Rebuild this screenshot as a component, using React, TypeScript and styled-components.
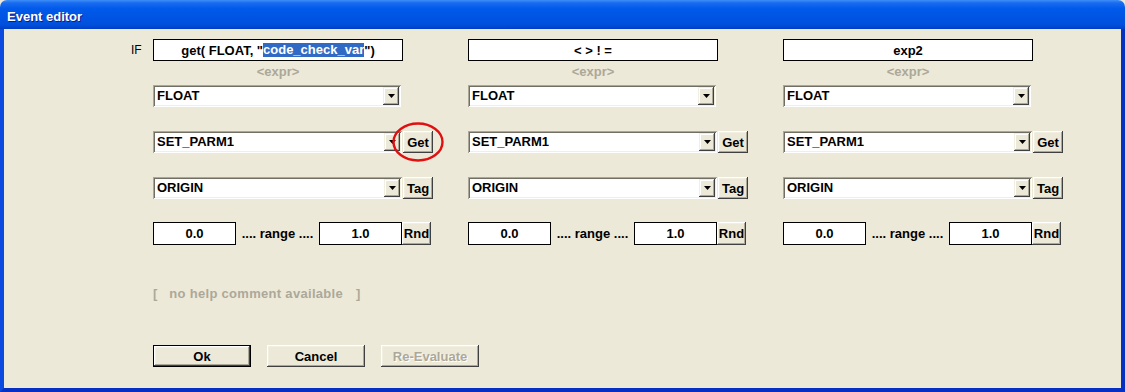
import styled, { createGlobalStyle } from "styled-components";

const GlobalStyle = createGlobalStyle`
  html, body {
    margin: 0;
    padding: 0;
    background: #ece9d8;
  }
  #root {
    width: 1125px;
    height: 392px;
  }
`;

interface ColumnData {
  expr: string;
  selected?: string;
  after?: string;
  type: string;
  parm: string;
  origin: string;
  min: string;
  max: string;
  circled?: boolean;
}

const columns: ColumnData[] = [
  {
    expr: 'get( FLOAT, "',
    selected: "code_check_var",
    after: '")',
    type: "FLOAT",
    parm: "SET_PARM1",
    origin: "ORIGIN",
    min: "0.0",
    max: "1.0",
    circled: true,
  },
  { expr: "< > ! =", type: "FLOAT", parm: "SET_PARM1", origin: "ORIGIN", min: "0.0", max: "1.0" },
  { expr: "exp2", type: "FLOAT", parm: "SET_PARM1", origin: "ORIGIN", min: "0.0", max: "1.0" },
];

function Combo({ value, width }: { value: string; width: number }) {
  return (
    <Select $width={width}>
      <SelectValue>{value}</SelectValue>
      <ArrowButton>
        <svg width="7" height="4" viewBox="0 0 7 4">
          <path d="M0 0h7L3.5 4z" fill="#000" />
        </svg>
      </ArrowButton>
    </Select>
  );
}

export default function App() {
  return (
    <>
      <GlobalStyle />
      <Window>
        <TitleBar>
          <TitleText>Event editor</TitleText>
        </TitleBar>

        <Frame>
          <Editor>
            <IfLabel>IF</IfLabel>
            {columns.map((c, i) => (
              <Column key={i}>
                <ExprBox>
                  {c.expr}
                  {c.selected && <Selected>{c.selected}</Selected>}
                  {c.after}
                </ExprBox>
                <Hint>&lt;expr&gt;</Hint>

                <Combo value={c.type} width={248} />

                <ChoiceRow $gap={24}>
                  <Combo value={c.parm} width={249} />
                  <SideButtonWrap>
                    <SideButton $width={30}>Get</SideButton>
                    {c.circled && (
                      <CircleMark width="54" height="42" viewBox="0 0 54 42">
                        <ellipse cx="27" cy="21" rx="24.5" ry="18.5" fill="none" stroke="#e01010" strokeWidth="2.4" />
                      </CircleMark>
                    )}
                  </SideButtonWrap>
                </ChoiceRow>

                <ChoiceRow $gap={24}>
                  <Combo value={c.origin} width={249} />
                  <SideButton $width={30}>Tag</SideButton>
                </ChoiceRow>

                <RangeRow>
                  <NumBox>{c.min}</NumBox>
                  <RangeLabel>.... range ....</RangeLabel>
                  <NumBox>{c.max}</NumBox>
                  <SideButton $width={29} $tall>
                    Rnd
                  </SideButton>
                </RangeRow>
              </Column>
            ))}
          </Editor>

          <HelpText>
            <span>[</span>
            <HelpMessage>no help comment available</HelpMessage>
            <span>]</span>
          </HelpText>

          <ButtonBar>
            <DialogButton $default>Ok</DialogButton>
            <DialogButton>Cancel</DialogButton>
            <DialogButton disabled>Re-Evaluate</DialogButton>
          </ButtonBar>
        </Frame>
      </Window>
    </>
  );
}

// ---------- styled components ----------
const Window = styled.div`
  width: 1125px;
  height: 392px;
  display: flex;
  flex-direction: column;
  font-family: "Liberation Sans", Arial, sans-serif;
  font-size: 13px;
  font-weight: 700;
  color: #000;
  overflow: hidden;
`;

const TitleBar = styled.div`
  height: 29px;
  flex: 0 0 29px;
  display: flex;
  align-items: center;
  padding: 0 7px;
  border-radius: 7px 7px 0 0;
  background: linear-gradient(
    to bottom,
    #3d8ff8 0%,
    #1a6cf0 10%,
    #005aea 30%,
    #0054e3 60%,
    #0050dc 85%,
    #003fc4 100%
  );
`;

const TitleText = styled.span`
  color: #fff;
  font-size: 13px;
  font-weight: 700;
  text-shadow: 1px 1px 0 #0a1e8c;
  margin-top: 3px;
`;

const Frame = styled.div`
  flex: 1 1 auto;
  display: flex;
  flex-direction: column;
  background: #ece9d8;
  border: 4px solid #0838d0;
  border-top: none;
  border-left-color: #0a4ae0;
  border-right-color: #0630c0;
  border-bottom-color: #0630c4;
  padding-top: 10px;
`;

const Editor = styled.div`
  display: grid;
  grid-template-columns: 149px repeat(3, 315px);
`;

const IfLabel = styled.div`
  height: 22px;
  line-height: 22px;
  padding-left: 127px;
  font-weight: 400;
  font-size: 12px;
`;

const Column = styled.div`
  display: flex;
  flex-direction: column;
  align-items: flex-start;
`;

const ExprBox = styled.div`
  box-sizing: border-box;
  width: 250px;
  height: 22px;
  border: 1px solid #000;
  background: #fff;
  display: flex;
  align-items: center;
  justify-content: center;
  white-space: pre;
`;

const Selected = styled.span`
  background: #316ac5;
  color: #fff;
  line-height: 14px;
`;

const Hint = styled.div`
  width: 250px;
  height: 24px;
  line-height: 22px;
  text-align: center;
  color: #aca899;
`;

const Select = styled.div<{ $width: number }>`
  box-sizing: border-box;
  width: ${({ $width }) => $width}px;
  height: 22px;
  display: flex;
  align-items: stretch;
  padding: 2px;
  background: #fff;
  box-shadow:
    inset 1px 1px #aca899,
    inset -1px -1px #fff,
    inset 2px 2px #716f64,
    inset -2px -2px #f1efe2;
`;

const SelectValue = styled.span`
  flex: 1 1 auto;
  line-height: 18px;
  padding-left: 2px;
  white-space: nowrap;
`;

const ArrowButton = styled.span`
  flex: 0 0 16px;
  display: flex;
  align-items: center;
  justify-content: center;
  background: #ece9d8;
  box-shadow:
    inset -1px -1px #404040,
    inset 1px 1px #f1efe2,
    inset -2px -2px #aca899,
    inset 2px 2px #fff;
`;

const ChoiceRow = styled.div<{ $gap: number }>`
  display: flex;
  align-items: center;
  gap: 1px;
  margin-top: ${({ $gap }) => $gap}px;
`;

const SideButtonWrap = styled.div`
  position: relative;
  display: flex;
`;

const SideButton = styled.button<{ $width: number; $tall?: boolean }>`
  box-sizing: border-box;
  width: ${({ $width }) => $width}px;
  height: ${({ $tall }) => ($tall ? 23 : 22)}px;
  padding: 0;
  border: none;
  background: #ece9d8;
  font: inherit;
  color: #000;
  box-shadow:
    inset -1px -1px #404040,
    inset 1px 1px #fff,
    inset -2px -2px #aca899,
    inset 2px 2px #f1efe2;
`;

const CircleMark = styled.svg`
  position: absolute;
  left: -12px;
  top: -10px;
  pointer-events: none;
`;

const RangeRow = styled.div`
  display: flex;
  align-items: center;
  margin-top: 23px;
`;

const NumBox = styled.div`
  box-sizing: border-box;
  width: 83px;
  height: 23px;
  border: 1px solid #000;
  background: #fff;
  display: flex;
  align-items: center;
  justify-content: center;
`;

const RangeLabel = styled.span`
  width: 83px;
  text-align: center;
  white-space: nowrap;
`;

const HelpText = styled.div`
  display: flex;
  margin: 42px 0 0 149px;
  line-height: 14px;
  color: #aca899;
  white-space: nowrap;
`;

const HelpMessage = styled.span`
  padding: 0 13px 0 12px;
  letter-spacing: 0.3px;
`;

const ButtonBar = styled.div`
  display: flex;
  gap: 16px;
  margin: 44px 0 0 149px;
`;

const DialogButton = styled.button<{ $default?: boolean }>`
  box-sizing: border-box;
  width: 98px;
  height: 22px;
  padding: 0;
  border: ${({ $default }) => ($default ? "1px solid #000" : "none")};
  background: #ece9d8;
  font: inherit;
  color: #000;
  box-shadow:
    inset -1px -1px #404040,
    inset 1px 1px #fff,
    inset -2px -2px #aca899,
    inset 2px 2px #f1efe2;

  &:disabled {
    color: #aca899;
    text-shadow: 1px 1px 0 #fff;
  }
`;
